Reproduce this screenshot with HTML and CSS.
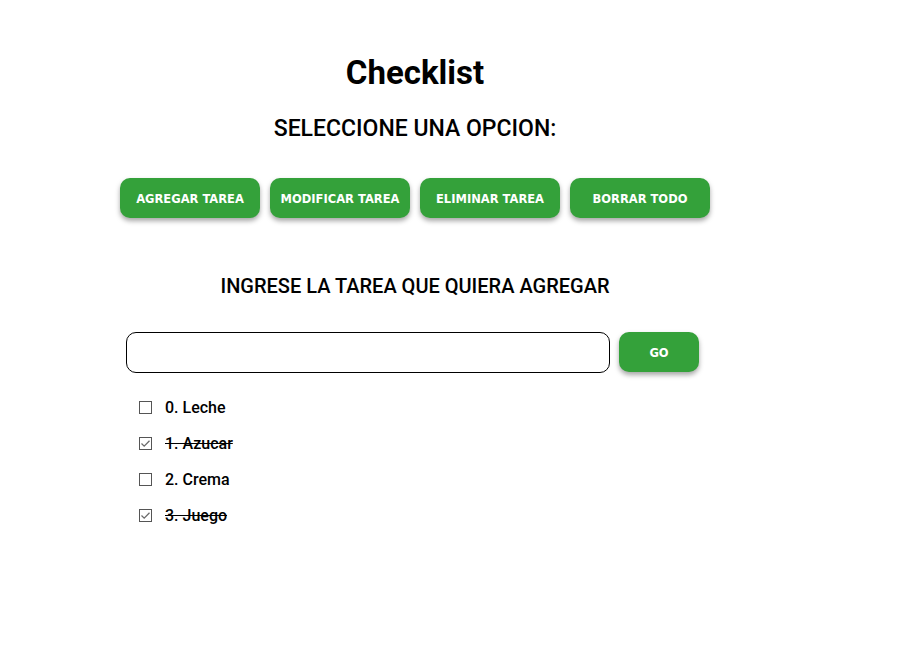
FILE: index.html
```html
<!DOCTYPE html>
<html lang="es">
<head>
<meta charset="utf-8">
<title>Checklist</title>
<link rel="stylesheet" href="styles.css">
</head>
<body>
<main class="app">
  <h1 class="title">Checklist</h1>
  <h2 class="subtitle">SELECCIONE UNA OPCION:</h2>
  <div class="actions">
    <button class="btn">AGREGAR TAREA</button>
    <button class="btn">MODIFICAR TAREA</button>
    <button class="btn">ELIMINAR TAREA</button>
    <button class="btn">BORRAR TODO</button>
  </div>
  <h3 class="prompt">INGRESE LA TAREA QUE QUIERA AGREGAR</h3>
  <div class="form-row">
    <input class="task-input" type="text">
    <button class="btn btn-go">GO</button>
  </div>
  <ul class="list">
    <li class="item"><span class="box"></span><span class="label">0. Leche</span></li>
    <li class="item done"><span class="box"><svg viewBox="0 0 13 13" width="13" height="13"><path d="M2.5 6.5 L5.2 9.2 L10.5 3.8" fill="none" stroke="#6b6b6b" stroke-width="1.3"/></svg></span><span class="label">1. Azucar</span></li>
    <li class="item"><span class="box"></span><span class="label">2. Crema</span></li>
    <li class="item done"><span class="box"><svg viewBox="0 0 13 13" width="13" height="13"><path d="M2.5 6.5 L5.2 9.2 L10.5 3.8" fill="none" stroke="#6b6b6b" stroke-width="1.3"/></svg></span><span class="label">3. Juego</span></li>
  </ul>
</main>
</body>
</html>
```

FILE: styles.css
```css
html, body {
  margin: 0;
  padding: 0;
  background: #ffffff;
}

body {
  font-family: Roboto, "Liberation Sans", sans-serif;
  color: #000;
}

.app {
  width: 600px;
  margin-left: 115px;
  padding-top: 53px;
  text-align: center;
}

.title {
  margin: 0;
  font-size: 33px;
  line-height: 40px;
  font-weight: 700;
}

.subtitle {
  margin: 21px 0 0;
  font-size: 23px;
  line-height: 30px;
  font-weight: 500;
}

.actions {
  display: flex;
  justify-content: center;
  gap: 10px;
  margin-top: 34px;
}

.btn {
  width: 140px;
  height: 40px;
  border: none;
  border-radius: 10px;
  background: #34a13a;
  color: #ffffff;
  font-family: "DejaVu Sans", Verdana, sans-serif;
  font-weight: 700;
  font-size: 11.5px;
  box-shadow: 0 3px 5px rgba(0, 0, 0, 0.35);
  padding: 1px 0 0;
}

.prompt {
  margin: 56px 0 0;
  font-size: 20px;
  line-height: 24px;
  font-weight: 500;
}

.form-row {
  display: flex;
  align-items: flex-start;
  gap: 9px;
  margin-top: 34px;
  padding-left: 11px;
}

.task-input {
  width: 484px;
  height: 41px;
  box-sizing: border-box;
  border: 1px solid #000;
  border-radius: 10px;
  margin: 0;
  padding: 0 10px;
}

.btn-go {
  width: 80px;
}

.list {
  list-style: none;
  margin: 16px 0 0;
  padding: 0 0 0 24px;
  text-align: left;
}

.item {
  display: flex;
  align-items: center;
  height: 36px;
  font-size: 16px;
  font-weight: 500;
}

.box {
  width: 13px;
  height: 13px;
  box-sizing: border-box;
  border: 1px solid #555;
  margin-right: 13px;
  position: relative;
}

.box svg {
  position: absolute;
  left: -1px;
  top: -1px;
}

.done .label {
  text-decoration: line-through;
}
```
